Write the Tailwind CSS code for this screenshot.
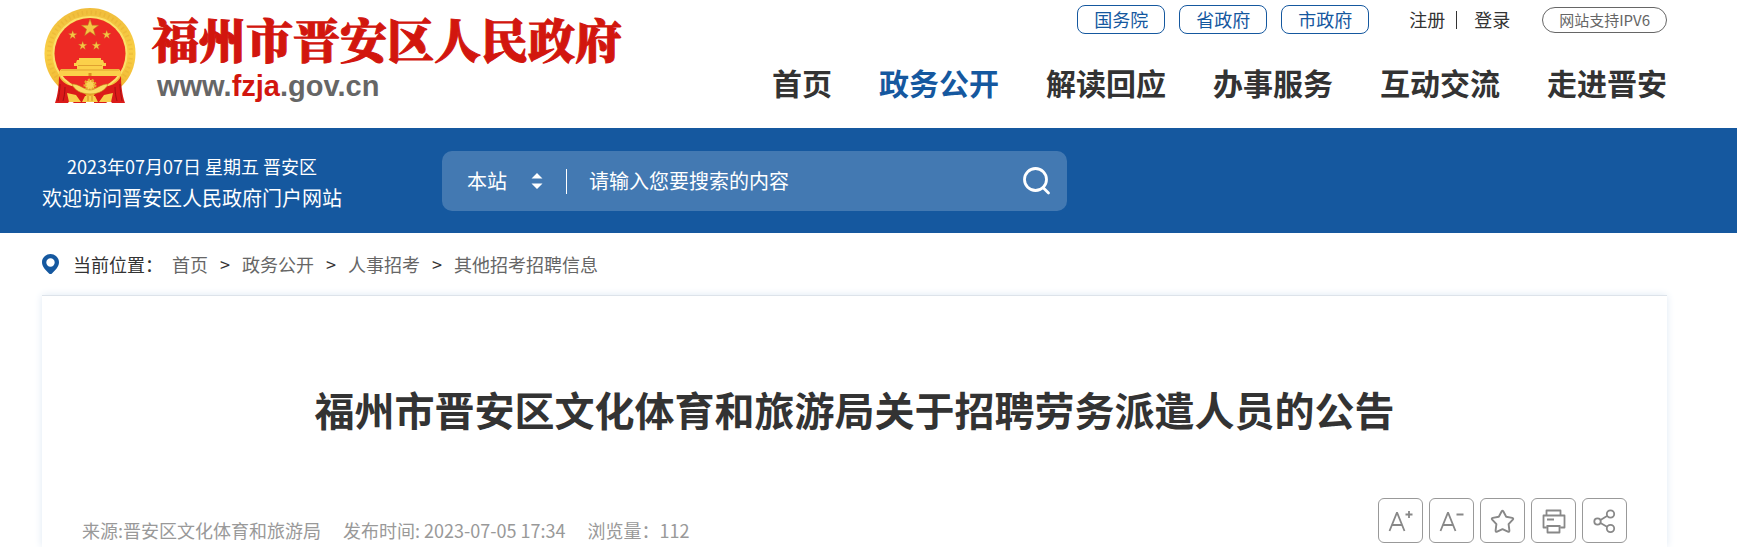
<!DOCTYPE html>
<html lang="zh-CN">
<head>
  <meta charset="UTF-8" />
  <meta name="viewport" content="width=device-width, initial-scale=1" />
  <title>福州市晋安区文化体育和旅游局关于招聘劳务派遣人员的公告</title>
  <script src="https://cdn.jsdelivr.net/npm/@tailwindcss/browser@4"></script>
</head>
<body class="min-h-screen flex flex-col bg-white text-[#333] font-['Noto_Sans_CJK_SC',sans-serif]">
  <header class="flex justify-between h-32 pl-11 pr-[70px]">
    <a href="#" class="flex items-start gap-4 pt-2">
      <svg class="w-[92px] h-24 shrink-0" viewBox="0 0 92 96" role="img" aria-label="国徽">
        <defs>
          <linearGradient id="gold" x1="0" y1="0" x2="0" y2="1">
            <stop offset="0" stop-color="#f0bd3c" />
            <stop offset=".5" stop-color="#f9cf45" />
            <stop offset="1" stop-color="#eeb02f" />
          </linearGradient>
        </defs>
        <circle cx="46" cy="45.500" r="45.500" fill="url(#gold)" />
        <circle cx="46" cy="45.500" r="41" fill="none" stroke="#d99c27" stroke-width="4" stroke-dasharray="1.500 3" opacity=".25" />
        <circle cx="46" cy="45.500" r="36.500" fill="none" stroke="#fbe06a" stroke-width="2" />
        <circle cx="46" cy="45.500" r="35.500" fill="#ed2a24" />
        <!-- stars -->
        <g fill="#f6c544" stroke="#b98320" stroke-width=".5">
          <path id="star" d="M46 11l2.100 6.200 6.500.1-5.200 3.900 1.900 6.300-5.300-3.800-5.300 3.800 1.900-6.300-5.200-3.900 6.500-.1z" />
          <use href="#star" transform="translate(5.700 17) scale(.5)" />
          <use href="#star" transform="translate(39.700 16.700) scale(.5)" />
          <use href="#star" transform="translate(15.700 27.700) scale(.5)" />
          <use href="#star" transform="translate(29.300 27.700) scale(.5)" />
        </g>
        <!-- gate -->
        <path fill="#fbd04a" d="M35 50h22v2h2l1 3h2v3h-3v3h16l2 3v4H15v-4l2-3h16v-3h-3v-3h2l1-3h2z" />
        <path stroke="#d9962a" stroke-width=".8" d="M34 57.500h24M17 62h58" />
        <path fill="#d98f20" d="M44.500 65h3v3h-3z" />
        <!-- ribbons -->
        <path fill="#db1b19" d="M15 68c3 7 9 10 18 11l9 8v8H30l-4-3-2 3H11c3-8 4-19 4-27zM77 68c-3 7-9 10-18 11l-9 8v8h12l4-3 2 3h13c-3-8-4-19-4-27z" />
        <path fill="none" stroke="#a50f12" stroke-width="1" d="M16 76c0 6-1 11-2 17M21 79c0 6-1 10-2 14M76 76c0 6 1 11 2 17M71 79c0 6 1 10 2 14" />
        <!-- gear and wreath ends -->
        <circle cx="46" cy="77" r="5" fill="#f9d355" stroke="#e8a92c" stroke-width="3" stroke-dasharray="2 1.500" />
        <path fill="#fadb62" stroke="#c67f18" stroke-width=".6" d="M28 76c8 0 12 6 18 6s10-6 18-6c-2 6-9 10-18 10s-16-4-18-10z" />
        <path fill="#f8cf4b" d="M23 85l9 2 5 7H25zM69 85l-9 2-5 7h12zM41 88h10l3 6H38z" />
        <path stroke="#c67f18" stroke-width=".8" d="M44 88v5M48 88v5" />
      </svg>
      <span class="flex flex-col">
        <span class="text-[47px] leading-[60px] font-black text-[#d2160e] whitespace-nowrap font-['Noto_Serif_CJK_SC','Noto_Sans_CJK_SC',serif] [-webkit-text-stroke:1px_#d2160e]">福州市晋安区人民政府</span>
        <span class="pl-[5px] pt-[2px] text-[29px] leading-8 font-bold text-[#666] font-['Liberation_Sans',sans-serif]">www.<span class="text-[#d2160e]">fzja</span>.gov.cn</span>
      </span>
    </a>

    <div class="flex flex-col items-end">
      <div class="flex items-center pt-[5px] text-lg leading-[27px] whitespace-nowrap">
        <div class="flex gap-[14px] text-[#15589f]">
          <a href="#" class="px-4 border border-[#15589f] rounded-lg">国务院</a>
          <a href="#" class="px-4 border border-[#15589f] rounded-lg">省政府</a>
          <a href="#" class="px-4 border border-[#15589f] rounded-lg">市政府</a>
        </div>
        <div class="flex items-center ml-10 mr-8">
          <a href="#">注册</a>
          <span class="w-px h-[18px] ml-[11px] mr-[17px] bg-[#333]"></span>
          <a href="#">登录</a>
        </div>
        <a href="#" class="px-4 border border-[#666] rounded-full text-[15px] leading-6 text-[#666]">网站支持IPV6</a>
      </div>
      <nav class="flex gap-[47px] mt-[26px] text-3xl leading-[44px] font-bold whitespace-nowrap">
        <a href="#">首页</a>
        <a href="#" class="text-[#15589f]">政务公开</a>
        <a href="#">解读回应</a>
        <a href="#">办事服务</a>
        <a href="#">互动交流</a>
        <a href="#">走进晋安</a>
      </nav>
    </div>
  </header>

  <section class="flex items-start h-[105px] pl-[42px] pr-[70px] bg-[#15589f] text-white">
    <div class="w-[400px] shrink-0 pt-[22px]">
      <p class="pl-[25px] text-lg leading-8">2023年07月07日 星期五 晋安区</p>
      <p class="text-xl leading-8">欢迎访问晋安区人民政府门户网站</p>
    </div>
    <form class="flex items-center w-[625px] h-[60px] mt-[23px] pl-[25px] pr-4 rounded-[10px] bg-white/20 text-xl">
      <select aria-label="搜索范围" class="appearance-none w-16 bg-transparent outline-none">
        <option>本站</option>
      </select>
      <svg class="w-3 h-4 shrink-0 pointer-events-none" viewBox="0 0 12 16" fill="#fff">
        <path d="M6 0l5.500 5.500H.5zM6 16L.5 10.500h11z" />
      </svg>
      <span class="w-px h-[25px] ml-[23px] mr-[22px] bg-white"></span>
      <input type="text" aria-label="搜索" placeholder="请输入您要搜索的内容" class="flex-1 min-w-0 bg-transparent outline-none placeholder:text-white" />
      <button type="button" aria-label="搜索">
        <svg class="w-7 h-7" viewBox="0 0 28 28" fill="none" stroke="#fff" stroke-width="2.800" stroke-linecap="round">
          <circle cx="12.500" cy="12.500" r="11" />
          <path d="M20 20.500l5.500 5.500" />
        </svg>
      </button>
    </form>
  </section>

  <nav class="flex items-center h-[62px] px-[42px] text-lg text-[#666] whitespace-nowrap">
    <svg class="w-[17px] h-5 mr-[14px]" viewBox="0 0 17 20">
      <path fill="#15589f" fill-rule="evenodd" d="M8.500 0C3.800 0 0 3.700 0 8.300 0 13 4 16.500 7 19.400c.9.800 2.100.8 3 0 3-2.900 7-6.400 7-11.100C17 3.700 13.200 0 8.500 0zm0 4.300a4.200 4.200 0 1 1 0 8.400 4.200 4.200 0 0 1 0-8.400z" />
    </svg>
    <span class="mr-[9px] text-[#333]">当前位置：</span>
    <a href="#">首页</a>
    <span class="mx-3 text-[#333]">&gt;</span>
    <a href="#">政务公开</a>
    <span class="mx-3 text-[#333]">&gt;</span>
    <a href="#">人事招考</a>
    <span class="mx-3 text-[#333]">&gt;</span>
    <a href="#">其他招考招聘信息</a>
  </nav>

  <main class="flex-1 ml-[42px] mr-[70px] px-10 border-t border-[#dde3ea] bg-white shadow-[0_0_8px_#dfe9f4]">
    <h1 class="pt-[83px] text-[40px] leading-[60px] font-bold text-center">福州市晋安区文化体育和旅游局关于招聘劳务派遣人员的公告</h1>
    <div class="flex justify-between pt-[59px]">
      <div class="flex gap-[22px] pt-[19px] text-lg leading-[27px] text-[#999] whitespace-nowrap">
        <span>来源:晋安区文化体育和旅游局</span>
        <span>发布时间: 2023-07-05 17:34</span>
        <span>浏览量：112</span>
      </div>
      <div class="flex gap-[6px]">
        <button type="button" aria-label="放大字体" class="w-[45px] h-[45px] border border-[#999] rounded-md">
          <svg class="w-full h-full" viewBox="0 0 43 43" fill="none" stroke="#888" stroke-width="1.800">
            <path d="M10.500 32L17.800 14h.4l7.300 18M13 26h10M26.500 15.500h7M30 12v7" />
          </svg>
        </button>
        <button type="button" aria-label="缩小字体" class="w-[45px] h-[45px] border border-[#999] rounded-md">
          <svg class="w-full h-full" viewBox="0 0 43 43" fill="none" stroke="#888" stroke-width="1.800">
            <path d="M10.500 32L17.800 14h.4l7.300 18M13 26h10M26.500 15.500h7" />
          </svg>
        </button>
        <button type="button" aria-label="收藏" class="w-[45px] h-[45px] border border-[#999] rounded-md">
          <svg class="w-full h-full" viewBox="0 0 43 43" fill="none" stroke="#888" stroke-width="1.900" stroke-linejoin="round">
            <path d="M20.600 12.500q.9-1.500 1.800 0l2.800 5.300 6 1.100q1.700.5.6 1.800l-4.200 4.500.8 6.400q0 1.700-1.500 1.100L21.500 30.100l-5.400 2.600q-1.500.6-1.500-1.100l.8-6.400-4.200-4.500q-1.100-1.300.6-1.800l6-1.100z" />
          </svg>
        </button>
        <button type="button" aria-label="打印" class="w-[45px] h-[45px] border border-[#999] rounded-md">
          <svg class="w-full h-full" viewBox="0 0 43 43" fill="none" stroke="#888" stroke-width="1.800" stroke-linejoin="round">
            <path d="M14.500 16.500v-5h14v5M14.500 28.500h-3v-12h21v12h-4M14.500 27h14M15.500 27v6.500h12V27M15 20.500h7" />
          </svg>
        </button>
        <button type="button" aria-label="分享" class="w-[45px] h-[45px] border border-[#999] rounded-md">
          <svg class="w-full h-full" viewBox="0 0 43 43" fill="none" stroke="#888" stroke-width="1.800">
            <circle cx="14.500" cy="22.500" r="3.200" />
            <circle cx="27.500" cy="15" r="3.700" />
            <circle cx="27.500" cy="29.500" r="3.700" />
            <path d="M17.500 21l6.500-4M17.500 24l6.500 3.800" />
          </svg>
        </button>
      </div>
    </div>
  </main>
</body>
</html>
